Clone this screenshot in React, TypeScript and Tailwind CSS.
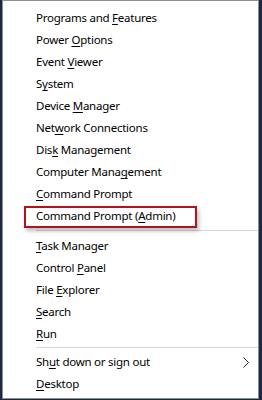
import React from "react";

type Item = { pre: string; key: string; post: string };

const U = ({ i }: { i: Item }) => (
  <span>
    {i.pre}
    <span className="underline underline-offset-[2px] decoration-1">{i.key}</span>
    {i.post}
  </span>
);

const group1: Item[] = [
  { pre: "Programs and ", key: "F", post: "eatures" },
  { pre: "Power ", key: "O", post: "ptions" },
  { pre: "Event ", key: "V", post: "iewer" },
  { pre: "S", key: "y", post: "stem" },
  { pre: "Device ", key: "M", post: "anager" },
  { pre: "Net", key: "w", post: "ork Connections" },
  { pre: "Dis", key: "k", post: " Management" },
  { pre: "Computer Mana", key: "g", post: "ement" },
  { pre: "", key: "C", post: "ommand Prompt" },
];

const group2: Item[] = [
  { pre: "", key: "T", post: "ask Manager" },
  { pre: "Control ", key: "P", post: "anel" },
  { pre: "File ", key: "E", post: "xplorer" },
  { pre: "", key: "S", post: "earch" },
  { pre: "", key: "R", post: "un" },
];

const Row = ({ i, children }: { i: Item; children?: React.ReactNode }) => (
  <div className="relative h-[22px] flex items-center pl-[33px] text-black">
    <U i={i} />
    {children}
  </div>
);

export default function App() {
  return (
    <div
      className="w-[262px] h-[400px] bg-[#1b2a44] flex"
      style={{ fontFamily: '"Noto Sans", "Open Sans", sans-serif' }}
    >
      <div className="ml-[2px] w-[257px] h-[399px] bg-white border border-[#8e8e8e] pt-[6px] text-[11.5px] tracking-[-0.25px] leading-none">
        {group1.map((i) => (
          <Row key={i.pre + i.key + i.post} i={i} />
        ))}
        <Row i={{ pre: "Command Prompt (", key: "A", post: "dmin)" }}>
          <div className="absolute left-[21px] top-[1px] w-[173px] h-[22px] border-2 border-[#b3131b] shadow-[2px_3px_4px_rgba(0,0,0,0.25)]" />
        </Row>
        <div className="h-[8px] pt-[3px] pl-[33px]">
          <div className="h-px w-full bg-[#d7d7d7]" />
        </div>
        {group2.map((i) => (
          <Row key={i.pre + i.key + i.post} i={i} />
        ))}
        <div className="h-[6px] pt-[2px] pl-[33px]">
          <div className="h-px w-full bg-[#d7d7d7]" />
        </div>
        <Row i={{ pre: "Sh", key: "u", post: "t down or sign out" }}>
          <svg
            className="absolute right-[8px] top-[6px]"
            width="7"
            height="11"
            viewBox="0 0 7 11"
          >
            <polyline
              points="0.5,0.5 5.5,5.5 0.5,10.5"
              fill="none"
              stroke="#2a1f4d"
              strokeWidth="1"
            />
          </svg>
        </Row>
        <Row i={{ pre: "", key: "D", post: "esktop" }} />
      </div>
    </div>
  );
}
